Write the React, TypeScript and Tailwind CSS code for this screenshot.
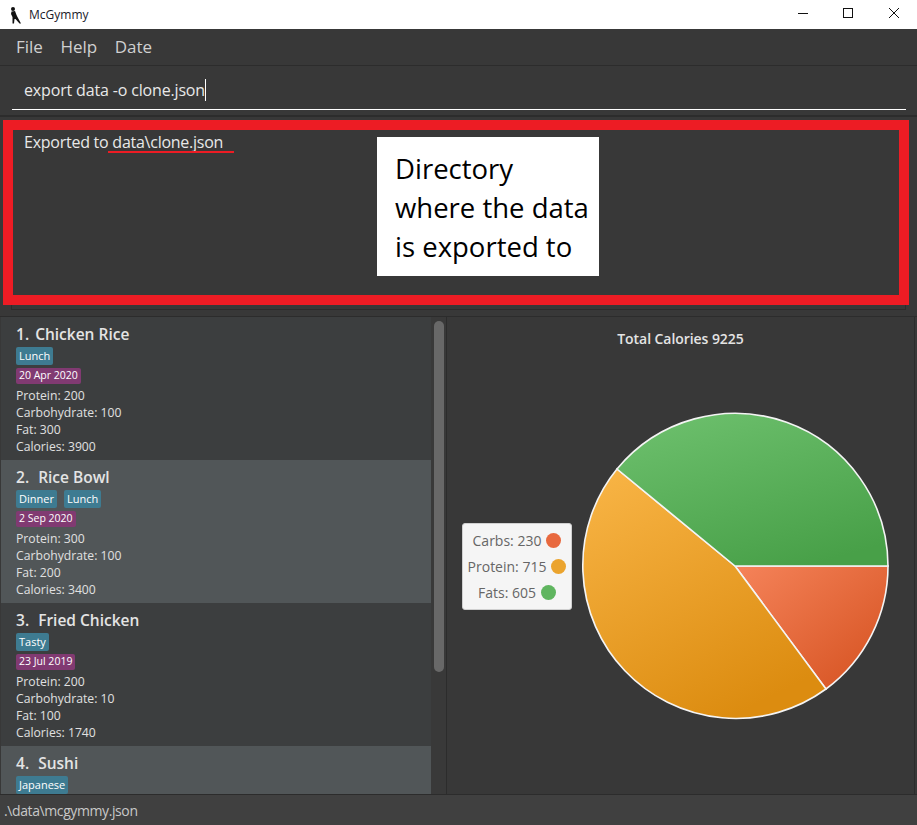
const FONT = "font-['Open_Sans','Noto_Sans',sans-serif]";

interface Meal {
  nombre: string;
  tags: string[];
  fecha?: string;
  macros?: string[];
}

// Sushi queda cortado por la barra de estado, solo se ve nombre y tag
const meals: Meal[] = [
  { nombre: "Chicken Rice", tags: ["Lunch"], fecha: "20 Apr 2020", macros: ["Protein: 200", "Carbohydrate: 100", "Fat: 300", "Calories: 3900"] },
  { nombre: "Rice Bowl", tags: ["Dinner", "Lunch"], fecha: "2 Sep 2020", macros: ["Protein: 300", "Carbohydrate: 100", "Fat: 200", "Calories: 3400"] },
  { nombre: "Fried Chicken", tags: ["Tasty"], fecha: "23 Jul 2019", macros: ["Protein: 200", "Carbohydrate: 10", "Fat: 100", "Calories: 1740"] },
  { nombre: "Sushi", tags: ["Japanese"] },
];

function MealCard({ meal, index }: { meal: Meal; index: number }) {
  return (
    <div className={`h-[143px] shrink-0 overflow-hidden pl-[15px] pt-[6px] ${index % 2 === 1 ? "bg-[#515658]" : "bg-[#3c3e3f]"}`}>
      <div className={`flex h-[22px] items-center text-[15.5px] font-semibold leading-[22px] text-[#e4e4e4] ${index === 0 ? "gap-[6px]" : "gap-[9px]"}`}>
        <span>{index + 1}.</span>
        <span>{meal.nombre}</span>
      </div>
      <div className="mt-[2px] flex gap-[7px]">
        {meal.tags.map((tag) => (
          <span key={tag} className="flex h-[18px] items-center rounded-[2px] bg-[#3e7b91] px-[3px] text-[11px] text-white">
            {tag}
          </span>
        ))}
      </div>
      {meal.fecha && (
        <div className="mt-[3px] flex">
          <span className="flex h-[16px] items-center rounded-[2px] bg-[#813a72] px-[3px] text-[10.5px] text-white">{meal.fecha}</span>
        </div>
      )}
      {meal.macros && (
        <div className="mt-[3px] text-[12.2px] leading-[17px] text-[#e0e0e0]">
          {meal.macros.map((linea) => (
            <div key={linea}>{linea}</div>
          ))}
        </div>
      )}
    </div>
  );
}

function PieChart() {
  return (
    <svg width="320" height="320" viewBox="0 0 320 320" className="block">
      <defs>
        <linearGradient id="carbs" x1="0" y1="0" x2="1" y2="1">
          <stop offset="0" stopColor="#f5835a" />
          <stop offset="1" stopColor="#d4501e" />
        </linearGradient>
        <linearGradient id="protein" x1="0.1" y1="0" x2="0.6" y2="1">
          <stop offset="0" stopColor="#f8b445" />
          <stop offset="1" stopColor="#dc8c10" />
        </linearGradient>
        <linearGradient id="fats" x1="0.2" y1="0" x2="0.7" y2="1">
          <stop offset="0" stopColor="#6cbf6c" />
          <stop offset="1" stopColor="#48a048" />
        </linearGradient>
      </defs>
      <g stroke="#f4f4f4" strokeWidth="1.6">
        <path d="M160 160 L313 160 A153 153 0 0 1 251 283 Z" fill="url(#carbs)" />
        <path d="M160 160 L251 283 A153 153 0 0 1 42 63 Z" fill="url(#protein)" />
        <path d="M160 160 L42 63 A153 153 0 0 1 313 160 Z" fill="url(#fats)" />
      </g>
    </svg>
  );
}

export default function App() {
  return (
    <div className={`relative flex h-[825px] w-[917px] flex-col overflow-hidden bg-[#383838] ${FONT}`}>
      {/* Barra de título */}
      <div className="flex h-[29px] shrink-0 items-center bg-white">
        <svg width="12" height="18" viewBox="0 0 12 18" className="ml-[10px] mr-[7px]">
          <circle cx="3" cy="3" r="2" fill="#111" />
          <path d="M1.5 5.5 L5 5 L6.5 9 L8 12 L11 17.5 L9.5 17.5 L5.5 13 L4.5 13 L4 17.5 L2.5 17.5 L2.5 11 L1 8 Z" fill="#111" />
        </svg>
        <span className="text-[12px] text-[#1a1a2a]">McGymmy</span>
        <div className="ml-auto flex h-full items-center">
          <svg width="46" height="29" viewBox="0 0 46 29"><path d="M19 13.5 H29" stroke="#111" strokeWidth="1" /></svg>
          <svg width="46" height="29" viewBox="0 0 46 29"><rect x="18.5" y="8.5" width="9" height="9" fill="none" stroke="#111" strokeWidth="1" /></svg>
          <svg width="46" height="29" viewBox="0 0 46 29"><path d="M18 8 L28 18 M28 8 L18 18" stroke="#111" strokeWidth="1" /></svg>
        </div>
      </div>

      {/* Menú */}
      <div className="flex h-[36px] shrink-0 items-center gap-[17.5px] pl-[16px] text-[17px] text-[#d0d0d0]">
        <span>File</span>
        <span>Help</span>
        <span>Date</span>
      </div>

      {/* Comando */}
      <div className="h-[50px] shrink-0 border-t border-[#2c2c2c] pl-[12px] pr-[11px]">
        <div className="flex h-[44px] items-center border-b border-white pl-[12px] pt-[5px] text-[16px] tracking-[-0.16px] text-[#e8e8e8]">
          <span>export data -o clone.json</span>
          <span className="h-[22px] w-px bg-white" />
        </div>
      </div>

      {/* Resultado */}
      <div className="h-[201px] shrink-0 border-t-2 border-[#2c2c2c] pl-[11px] pr-[11px] pt-[9px]">
        <div className="h-[184px] border border-[#2c2c2c] pl-[12px] pt-[5px] text-[16px] leading-[20px] tracking-[-0.25px] text-[#e8e8e8]">
          Exported to data\clone.json
        </div>
      </div>

      <div className="flex min-h-0 flex-1 border-t border-[#2c2c2c]">
        {/* Lista */}
        <div className="flex w-[447px] shrink-0 border-r border-[#2c2c2c] pl-px">
          <div className="flex w-[430px] flex-col overflow-hidden">
            {meals.map((meal, index) => (
              <MealCard key={meal.nombre} meal={meal} index={index} />
            ))}
          </div>
          <div className="flex-1 bg-[#393939] pl-[3px] pt-[4px]">
            <div className="h-[351px] w-[10px] rounded-[5px] bg-[#686868]" />
          </div>
        </div>

        {/* Gráfico */}
        <div className="mr-[2px] flex flex-1 flex-col items-center border-r border-[#2c2c2c]">
          <div className="mt-[12px] text-[14px] font-semibold leading-[20px] tracking-[-0.06px] text-[#e4e4e4]">Total Calories 9225</div>
          <div className="ml-[109px] mt-[57px]">
            <PieChart />
          </div>
        </div>
      </div>

      {/* Barra de estado */}
      <div className="flex h-[31px] shrink-0 items-center border-t border-[#2c2c2c] bg-[#404040] pl-[4px] text-[14px] tracking-[-0.4px] text-[#c8c8c8]">
        .\data\mcgymmy.json
      </div>

      {/* Anotaciones sobre la captura */}
      <div className="absolute left-[3px] top-[120px] h-[185px] w-[906px] border-[10px] border-[#ed1c24]" />
      <div className="absolute left-[108px] top-[151px] h-[2px] w-[126px] bg-[#ed1c24]" />
      <div className="absolute left-[377px] top-[137px] flex h-[139px] w-[222px] flex-col justify-center bg-white pl-[18px] pt-[2px] text-[27.5px] leading-[39px] text-black">
        <div>Directory</div>
        <div>where the data</div>
        <div>is exported to</div>
      </div>

      {/* Leyenda */}
      <div className="absolute left-[462px] top-[523px] flex h-[87px] w-[110px] flex-col items-center justify-center gap-[4px] rounded-[3px] border border-[#d0d0d0] bg-[#f5f5f5] text-[14px] leading-[22px] text-[#666]">
        {[
          { label: "Carbs: 230", color: "bg-[#e8693f]" },
          { label: "Protein: 715", color: "bg-[#eba42e]" },
          { label: "Fats: 605", color: "bg-[#5fb55f]" },
        ].map((row) => (
          <div key={row.label} className="flex items-center gap-[5px]">
            <span>{row.label}</span>
            <span className={`h-[15px] w-[15px] rounded-full ${row.color}`} />
          </div>
        ))}
      </div>
    </div>
  );
}
